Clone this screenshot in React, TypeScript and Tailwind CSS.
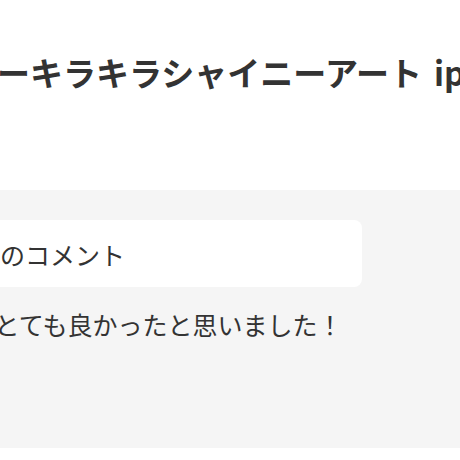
export default function App() {
  const font = { fontFamily: '"Noto Sans CJK JP", "Noto Sans", sans-serif' };
  return (
    <div className="w-[460px] h-[460px] overflow-hidden bg-white text-[#333]" style={font}>
      <div className="h-[190px] pt-[48px] overflow-hidden">
        <h1 className="-ml-[34px] whitespace-nowrap text-[33px] leading-[48px] font-bold">
          アーキラキラシャイニーアート<span className="ml-[12px]">iphone</span>
        </h1>
      </div>
      <section className="h-[258px] bg-[#f5f5f5] pt-[30px]">
        <div className="-ml-[80px] w-[442px] h-[67px] rounded-lg bg-white flex items-center pl-[5px]">
          <span className="whitespace-nowrap text-[25px] leading-[36px]">みんなのコメント</span>
        </div>
        <p className="-ml-[78px] mt-[19px] whitespace-nowrap text-[25px] leading-[36px]">
          とてもとても良かったと思いました！
        </p>
      </section>
    </div>
  );
}
